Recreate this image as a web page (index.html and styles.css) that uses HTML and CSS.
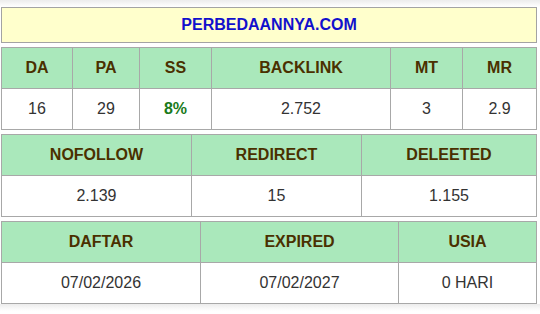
FILE: index.html
```html
<!DOCTYPE html>
<html>
<head>
<meta charset="utf-8">
<link rel="stylesheet" href="styles.css">
</head>
<body>
<div class="wrap">
  <div class="title">PERBEDAANNYA.COM</div>
  <table class="stats">
    <colgroup><col class="c71"><col class="c67"><col class="c72"><col class="c179"><col class="c72"><col class="c74"></colgroup>
    <tr class="head"><th>DA</th><th>PA</th><th>SS</th><th>BACKLINK</th><th>MT</th><th>MR</th></tr>
    <tr><td>16</td><td>29</td><td class="good">8%</td><td>2.752</td><td>3</td><td>2.9</td></tr>
  </table>
  <table class="stats">
    <colgroup><col class="c190"><col class="c170"><col class="c175"></colgroup>
    <tr class="head"><th>NOFOLLOW</th><th>REDIRECT</th><th>DELEETED</th></tr>
    <tr><td>2.139</td><td>15</td><td>1.155</td></tr>
  </table>
  <table class="stats">
    <colgroup><col class="c199"><col class="c198"><col class="c138"></colgroup>
    <tr class="head"><th>DAFTAR</th><th>EXPIRED</th><th>USIA</th></tr>
    <tr><td>07/02/2026</td><td>07/02/2027</td><td>0 HARI</td></tr>
  </table>
</div>
</body>
</html>
```

FILE: styles.css
```css
html, body {
  margin: 0;
  padding: 0;
}
body {
  background: linear-gradient(#ececec 0, #f7f7f7 4px, #ffffff 7px);
  font-family: "Liberation Sans", Arial, sans-serif;
  font-size: 16px;
}
.wrap {
  padding: 7px 0 0 1px;
  width: 536px;
  display: flex;
  flex-direction: column;
  gap: 4px;
}
.title {
  box-sizing: border-box;
  height: 36px;
  border: 1px solid #a3a3a3;
  background: #ffffcc;
  color: #1111cc;
  font-weight: bold;
  text-align: center;
  line-height: 34px;
}
.stats {
  width: 535px;
  table-layout: fixed;
  border-collapse: collapse;
}
.stats th, .stats td {
  border: 1px solid #a8a8a8;
  height: 41px;
  padding: 0;
  text-align: center;
  vertical-align: middle;
  box-sizing: border-box;
}
.stats th {
  background: #aae8bb;
  color: #4a3000;
  font-weight: bold;
}
.stats td {
  background: #ffffff;
  color: #333333;
}
.stats td.good {
  color: #1a7a1a;
  font-weight: bold;
}
.c71 { width: 71px; }
.c67 { width: 67px; }
.c72 { width: 72px; }
.c179 { width: 179px; }
.c74 { width: 74px; }
.c190 { width: 190px; }
.c170 { width: 170px; }
.c175 { width: 175px; }
.c199 { width: 199px; }
.c198 { width: 198px; }
.c138 { width: 138px; }
```
